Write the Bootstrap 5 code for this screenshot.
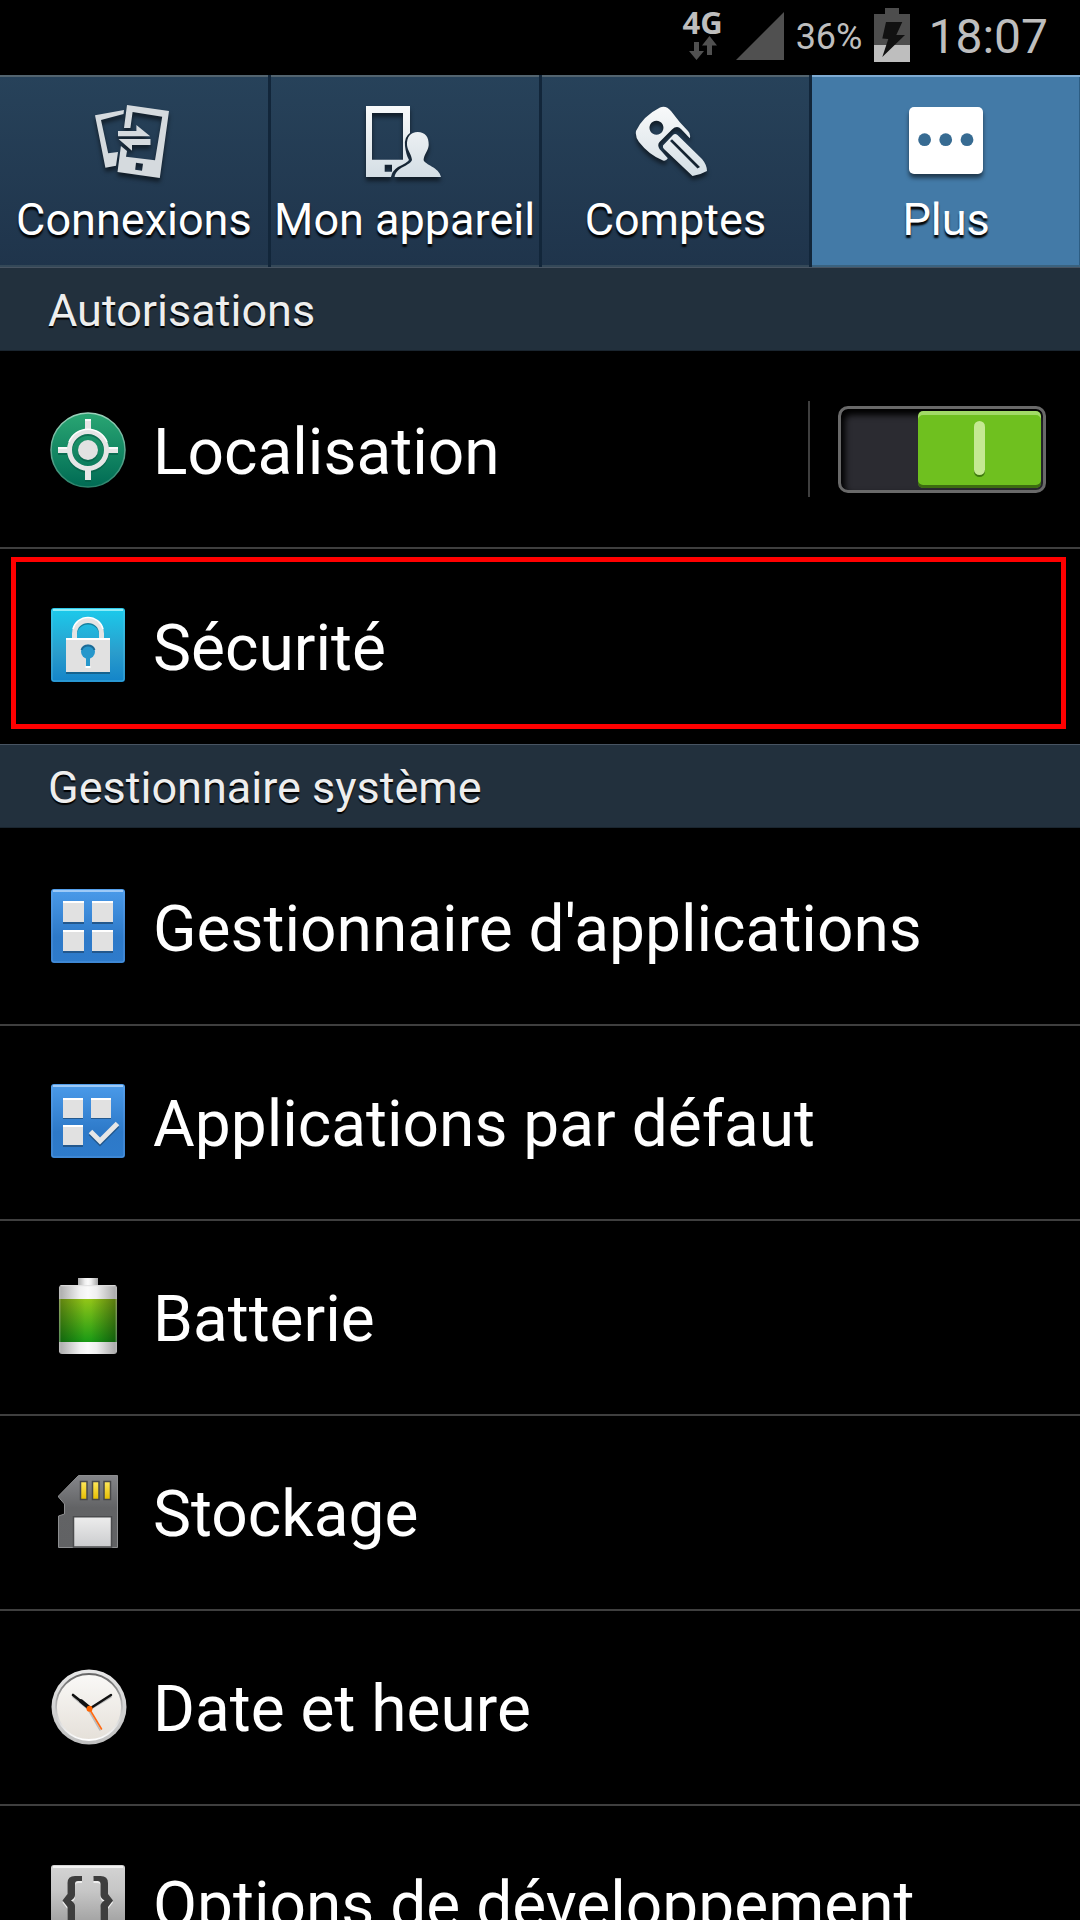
<!DOCTYPE html>
<html lang="fr">
<head>
<meta charset="utf-8">
<meta name="viewport" content="width=device-width, initial-scale=1">
<title>Paramètres</title>
<link href="https://cdn.jsdelivr.net/npm/bootstrap@5.3.0/dist/css/bootstrap.min.css" rel="stylesheet">
<style>
body{background:#000;color:#fff;font-family:Roboto,"Liberation Sans",sans-serif;overflow:hidden}
.screen{height:100vh}
svg{display:block;flex:none;overflow:visible}
.status{height:75px;flex:none;padding:8px 32px 0 0;color:#bebebe;line-height:58px;gap:12px}
.net{width:42px}
.net-name{font:700 31px/28px "Open Sans",sans-serif}
.pct{font-size:36px}
.clock{font-size:48px;padding-left:6px}
.tabs{height:192px;flex:none}
.tab{flex:1 1 0;border:solid #12263a;border-width:0 3px 0 0;background:linear-gradient(#27425a,#1f344b);box-shadow:inset 0 2px #53646f,inset 0 -2px #344858;color:#fff;font-size:45px;line-height:54px;padding:28px 0 0;gap:10px;white-space:nowrap;text-shadow:0 3px 2px #000;text-decoration:none}
.tab svg{filter:drop-shadow(0 4px 2px #0008)}
.tab.active{background:#437aa7;box-shadow:inset 0 2px #7eabd2,inset 0 -2px #3a627f,inset -1px 0 #2d5d83;border-width:0}
.group-title{margin:0 0 3px;height:84px;padding:3px 48px 0;background:#22303d;border-top:1px solid #485462;border-bottom:1px solid #1a252f;color:#eee;font-size:45px;font-weight:400;line-height:79px;text-shadow:0 2px 1px #000;flex:none}
.list-group .setting{height:195px;background:#000;color:#fff;border:solid #3f3f3f;border-width:0 0 2px;padding:0 34px 3px 51px;gap:28px;font-size:64px;line-height:74px;text-decoration:none}
.list-group .setting:last-child{border-color:#000}
.name{padding-top:8px;flex:1;white-space:nowrap}
.rule{width:2px;height:96px;background:#3f3f3f}
.toggle{appearance:none;display:flex;justify-content:flex-end;width:208px;height:87px;margin:0;padding:2px;border:3px solid #696969;border-radius:10px;background:#2b2b31;box-shadow:inset 3px 5px 6px 1px #000;cursor:pointer}
.toggle:not(:checked){justify-content:flex-start}
.toggle::before{content:"";width:123px;height:77px;border-radius:5px;background:url("data:image/svg+xml,%3Csvg xmlns='http://www.w3.org/2000/svg' width='11' height='56'%3E%3Crect y='2' width='11' height='54' rx='5.5' fill='%233f7a0e'/%3E%3Crect width='11' height='54' rx='5.5' fill='%23c5e992'/%3E%3C/svg%3E") center no-repeat,#6fc01f;box-shadow:inset 0 4px #a2db66,inset 0 -3px #3c6c10}
.focus-frame{position:absolute;inset:8px 14px 15px 11px;border:5px solid #f00;pointer-events:none}
</style>
</head>
<body>
<div class="screen d-flex flex-column overflow-hidden">
<header class="status d-flex justify-content-end">
  <div class="net d-flex flex-column align-items-center">
    <span class="net-name">4G</span>
    <svg width="28" height="24" viewBox="0 0 28 24"><path fill="#505050" d="M5 6h5v9h5L7.500 24 0 15h5zM20.500 0L28 9.500h-5V19h-5V9.500h-5z"/></svg>
  </div>
  <svg width="48" height="54" viewBox="0 0 48 54"><path fill="#505050" d="M48 4V52H0z"/></svg>
  <span class="pct">36%</span>
  <svg width="36" height="54" viewBox="0 0 36 54"><path fill="#4d4d4d" d="M11 0H25V6H36V54H0V6H11z"/><path fill="#bebebe" d="M0 37H36V54H0z"/><path fill="#111" d="M12 14H28.300L22.300 27H31L8.300 49 14.300 31 8.300 30.500z"/></svg>
  <time class="clock">18:07</time>
</header>

<nav class="tabs d-flex" aria-label="Paramètres">
  <a href="#" class="tab d-flex flex-column align-items-center">
    <svg width="82" height="80" viewBox="0 0 82 80" fill="#d5dade"><path fill-rule="evenodd" d="M34 2L76 8 66.800 75 24.500 69 27.900 43 34 48 33 53.700 62 57.300 69.200 13.700 39.600 9 37.400 25H31zM43 59.700L50 60.700 49 67.700 42.200 66.700z"/><path d="M2 12.300L31 7 30.500 11 8 17 15.200 50.300 25 49 23 62.700 12.400 64.700zM25 28H43.400V22L57.200 33.300H25zM57.500 36V42H39V47.700L25.500 36z"/></svg>
    <span>Connexions</span></a>
  <a href="#" class="tab d-flex flex-column align-items-center">
    <svg width="82" height="80" viewBox="0 0 82 80"><defs><linearGradient id="lite" gradientUnits="userSpaceOnUse" x1="0" y1="0" x2="0" y2="76"><stop stop-color="#fafbfb"/><stop offset="1" stop-color="#d3dde4"/></linearGradient></defs><path fill="url(#lite)" fill-rule="evenodd" d="M2 3H46V30Q40 34 41 43 42 52 45 57 43 60 34 64 28 68 27 74H2zM8 10H39V56.700H8zM20.700 61.700H28V68.700H20.700z"/><path fill="url(#lite)" d="M53.700 29C61 29 65 34 64.700 42 64.400 48 60 51 59.600 57 61 62 75 64 77 74H30.600C32 64 46 63 48 57 47.500 51 43.500 48 43 42 42.700 34 46.500 29 53.700 29z"/></svg>
    <span>Mon appareil</span></a>
  <a href="#" class="tab d-flex flex-column align-items-center">
    <svg width="82" height="80" viewBox="0 0 82 80"><path fill="url(#lite)" fill-rule="evenodd" d="M26 4.500Q32 2 37 8 45 19 54 28 57 31 55.800 35.300L47 26Q43 22 38 26.500L25.500 39Q23 42 25.500 46L33.800 55.300Q32 58.500 29 57.500 15 52 5 39 1 34 2 28 9 13 26 4.500zM22.400 17.700a7 7 0 1 0 .1 0z"/><path fill="url(#lite)" fill-rule="evenodd" d="M29 42.500L39 32Q41 30 43.500 32L68 56Q73 62 73 68 66 72 58.500 73L30 46Q28.500 44.500 29 42.500zM36 38L63.500 65.500 66 64 38 36.300z"/></svg>
    <span>Comptes</span></a>
  <a href="#" class="tab active d-flex flex-column align-items-center" aria-current="page">
    <svg width="82" height="80" viewBox="0 0 82 80"><rect x="4" y="4" width="74" height="67" rx="5" fill="#fff"/><g fill="#376b92"><circle cx="19.600" cy="36.700" r="6.400"/><circle cx="40.700" cy="36.700" r="6.400"/><circle cx="62" cy="36.700" r="6.400"/></g></svg>
    <span>Plus</span></a>
</nav>

<h2 class="group-title">Autorisations</h2>
<div class="list-group list-group-flush rounded-0 flex-shrink-0">
  <div class="setting list-group-item d-flex align-items-center">
    <svg width="74" height="74" viewBox="0 0 74 74"><defs><linearGradient id="green" x2="0" y2="1"><stop stop-color="#2aa673"/><stop offset="1" stop-color="#006b54"/></linearGradient><linearGradient id="rim" x2="0" y2="1"><stop stop-color="#9bd2bb"/><stop offset="1" stop-color="#2c846c"/></linearGradient></defs><circle cx="37" cy="38" r="37" fill="url(#green)" stroke="url(#rim)" stroke-width="1.500"/><g stroke="#075c46" fill="none" opacity=".6"><circle cx="37" cy="40" r="18.500" stroke-width="5"/><path d="M37 9V19M37 61V70M7 40H17M57 40H67" stroke-width="6"/></g><circle cx="37" cy="40" r="10" fill="#075c46" opacity=".6"/><g stroke="#e6e6e6" fill="none"><circle cx="37" cy="38" r="18.500" stroke-width="5"/><path d="M37 7V18M37 58V68M7 38H17M57 38H67" stroke-width="6"/></g><circle cx="37" cy="38" r="10" fill="#e2e2e2"/><path d="M34 8H40M7 36H16M58 36H67M18 30a20.500 20.500 0 0 1 38 0" fill="none" stroke="#fff" stroke-width="1.500"/></svg>
    <label class="name" for="loc">Localisation</label>
    <span class="rule"></span>
    <input class="toggle" type="checkbox" role="switch" id="loc" checked>
  </div>
  <a href="#" class="setting list-group-item d-flex align-items-center">
    <svg width="74" height="74" viewBox="0 0 74 74"><defs><linearGradient id="cyan" x2="0" y2="1"><stop stop-color="#1bcbec"/><stop offset=".6" stop-color="#2a9dcc"/><stop offset="1" stop-color="#1384c9"/></linearGradient></defs><rect width="74" height="74" rx="3" fill="url(#cyan)"/><rect x="1" y="1" width="72" height="72" rx="2" fill="none" stroke="#62c9ea" stroke-opacity=".55"/><path d="M2 2H72" stroke="#8cecf8" stroke-width="2"/><path d="M15 63H59V66H15z" fill="#16638f"/><path d="M23.500 31V27a13.500 13 0 0 1 27 0V31" fill="none" stroke="#16809f" stroke-width="5"/><path d="M23.500 31V25.500a13.500 13 0 0 1 27 0V31" fill="none" stroke="#e4e4e4" stroke-width="5"/><path d="M22 21a15.500 15.500 0 0 1 30 0" fill="none" stroke="#fff" stroke-width="1.500"/><path d="M15 30H59V64H15z" fill="#e1e1e1"/><path d="M15 31H59" stroke="#fff" stroke-width="2"/><path d="M34.500 59H39.500" stroke="#fff" stroke-width="2"/><circle cx="37" cy="43.700" r="7" fill="#2697cb"/><path d="M35 45H39V58H35z" fill="#2697cb"/><path d="M30.500 42a7 7 0 0 1 13 0" fill="none" stroke="#1c6b97" stroke-width="2"/></svg>
    <span class="name">Sécurité</span>
    <span class="focus-frame"></span>
  </a>
</div>

<h2 class="group-title">Gestionnaire système</h2>
<div class="list-group list-group-flush rounded-0 flex-shrink-0">
  <a href="#" class="setting list-group-item d-flex align-items-center">
    <svg width="74" height="74" viewBox="0 0 74 74"><defs><linearGradient id="blue" x2="0" y2="1"><stop stop-color="#4b9bea"/><stop offset=".65" stop-color="#2d79c8"/><stop offset="1" stop-color="#2e7bcb"/></linearGradient></defs><g id="tile"><rect width="74" height="74" rx="3" fill="url(#blue)"/><rect x="1" y="1" width="72" height="72" rx="2" fill="none" stroke="#71aef0" stroke-opacity=".5"/><path d="M2 2H72" stroke="#9dcaf8" stroke-width="2"/></g><path d="M12 33H33V35H12zM41 33H62V35H41zM12 62H33V64H12zM41 62H62V64H41z" fill="#23588d"/><path d="M12 12H33V33H12zM41 12H62V33H41zM12 41H33V62H12zM41 41H62V62H41z" fill="#e1e1e1"/><path d="M12 13H33M41 13H62M12 42H33M41 42H62" stroke="#fff" stroke-width="2"/></svg>
    <span class="name">Gestionnaire d'applications</span></a>
  <a href="#" class="setting list-group-item d-flex align-items-center">
    <svg width="74" height="74" viewBox="0 0 74 74"><use href="#tile"/><path d="M12 33H32V35H12zM40 33H60V35H40zM12 61H32V63H12z" fill="#23588d"/><path d="M12 14H32V34H12zM40 14H60V34H40zM12 41H32V61H12z" fill="#e1e1e1"/><path d="M12 15H32M40 15H60M12 42H32" stroke="#fff" stroke-width="2"/><path d="M39.500 49.500L49 59 66.500 41.500" fill="none" stroke="#23588d" stroke-width="5"/><path d="M39.500 47.500L49 57 66.500 39.500" fill="none" stroke="#e6e6e6" stroke-width="5"/></svg>
    <span class="name">Applications par défaut</span></a>
  <a href="#" class="setting list-group-item d-flex align-items-center">
    <svg width="74" height="74" viewBox="0 0 74 74"><defs><linearGradient id="metal"><stop stop-color="#a9a9a9"/><stop offset=".35" stop-color="#efefef"/><stop offset=".5" stop-color="#fafafa"/><stop offset=".65" stop-color="#efefef"/><stop offset="1" stop-color="#a5a5a5"/></linearGradient><linearGradient id="charge" x2="0" y2="1"><stop stop-color="#92c518"/><stop offset="1" stop-color="#199a15"/></linearGradient><linearGradient id="sides"><stop stop-opacity=".35"/><stop offset=".45" stop-opacity="0"/><stop offset=".55" stop-opacity="0"/><stop offset="1" stop-opacity=".4"/></linearGradient></defs><path d="M27-1H47V7H27z" fill="url(#metal)"/><rect x="8" y="6" width="58" height="69" rx="3" fill="url(#metal)"/><path d="M9.500 6.700H64.500" stroke="#dedede"/><path d="M8 20H66V63H8z" fill="url(#charge)"/><path d="M8 20H66V63H8z" fill="url(#sides)"/><path d="M8.700 8V73M65.300 8V73" stroke="#ddd" stroke-opacity=".35" stroke-width="1.500"/></svg>
    <span class="name">Batterie</span></a>
  <a href="#" class="setting list-group-item d-flex align-items-center">
    <svg width="74" height="74" viewBox="0 0 74 74"><defs><linearGradient id="sd" x2="0" y2="1"><stop stop-color="#85868a"/><stop offset=".45" stop-color="#626365"/><stop offset="1" stop-color="#616264"/></linearGradient><linearGradient id="gold" x2="0" y2="1"><stop stop-color="#ffe75c"/><stop offset="1" stop-color="#e5bd00"/></linearGradient><linearGradient id="paper" x2="0" y2="1"><stop stop-color="#ededed"/><stop offset="1" stop-color="#cbccce"/></linearGradient></defs><path d="M7.500 22L27.500 1.500H66.500V73.500H7.500V42L13.500 40V30L7.500 23z" fill="url(#sd)" stroke="#8d8e90"/><g fill="url(#gold)" stroke="#48484a" stroke-width="1.500"><path d="M29.500 7.500H36V25.500H29.500zM41.500 7.500H48V25.500H41.500zM53 7.500H59.500V25.500H53z"/></g><path d="M22.500 42.700H60.500V73H22.500z" fill="url(#paper)" stroke="#4b4c4e" stroke-width="1.500"/></svg>
    <span class="name">Stockage</span></a>
  <a href="#" class="setting list-group-item d-flex align-items-center">
    <svg width="74" height="74" viewBox="0 0 74 74"><defs><linearGradient id="face" x2="0" y2="1"><stop stop-color="#faf9f7"/><stop offset="1" stop-color="#e5e0d9"/></linearGradient><linearGradient id="bezel" x2="0" y2="1"><stop stop-color="#666"/><stop offset=".6" stop-color="#ccc"/><stop offset="1" stop-color="#fff"/></linearGradient><linearGradient id="case" x2="0" y2="1"><stop stop-color="#e8e8e8"/><stop offset="1" stop-color="#bfbfbf"/></linearGradient></defs><circle cx="38" cy="38" r="37.500" fill="url(#case)"/><circle cx="38" cy="38" r="33" fill="url(#face)" stroke="url(#bezel)" stroke-width="1.800"/><g fill="none" stroke-linecap="round"><path d="M22 28L38 41 60 28M38 42L49 61" stroke="#bbb" stroke-width="1.500"/><path d="M22 26L39 39.500" stroke="#111" stroke-width="2.600"/><path d="M30 32L39 39.500" stroke="#111" stroke-width="4"/><path d="M60 26L39 39.500" stroke="#111" stroke-width="2.400"/><path d="M38.500 40L50.500 60" stroke="#ff6a13" stroke-width="1.600"/></g><circle cx="38.500" cy="39.700" r="3" fill="#ff6400"/></svg>
    <span class="name">Date et heure</span></a>
  <a href="#" class="setting list-group-item d-flex align-items-center">
    <svg width="74" height="74" viewBox="0 0 74 74"><defs><linearGradient id="grey" x2="0" y2="1"><stop stop-color="#d4d4d4"/><stop offset=".35" stop-color="#c6c6c6"/><stop offset="1" stop-color="#909090"/></linearGradient></defs><rect width="74" height="74" rx="3" fill="url(#grey)"/><path d="M2 2H72" stroke="#f2f2f2" stroke-width="2"/><g fill="#eee" transform="translate(0 2)"><path id="brace" d="M31 11V16H27Q24 16 24 19V30Q24 33 20 35.500 24 38 24 41V56H31V61H24Q16.500 61 16.500 54V42L11.500 35.500 16.500 29V18Q16.500 11 24 11z"/><use href="#brace" transform="matrix(-1 0 0 1 73.500 0)"/></g><g fill="#3e3e3e"><path d="M31 11V16H27Q24 16 24 19V30Q24 33 20 35.500 24 38 24 41V56H31V61H24Q16.500 61 16.500 54V42L11.500 35.500 16.500 29V18Q16.500 11 24 11zM42.500 11V16H46.500Q49.500 16 49.500 19V30Q49.500 33 53.500 35.500 49.500 38 49.500 41V56H42.500V61H49.500Q57 61 57 54V42L62 35.500 57 29V18Q57 11 49.500 11z"/></g></svg>
    <span class="name">Options de développement</span></a>
</div>
</div>
<script src="https://cdn.jsdelivr.net/npm/bootstrap@5.3.0/dist/js/bootstrap.bundle.min.js"></script>
</body>
</html>
